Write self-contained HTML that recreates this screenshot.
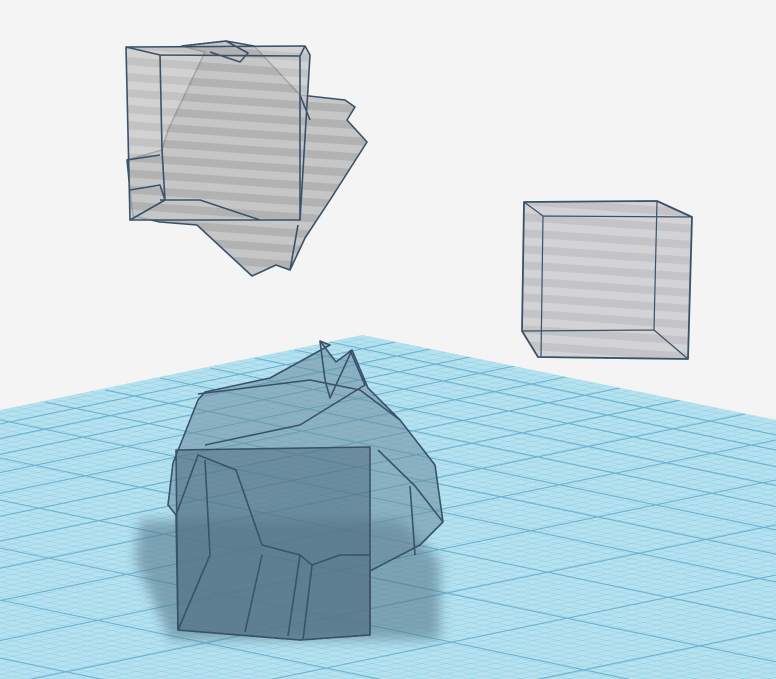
<!DOCTYPE html>
<html><head><style>html,body{margin:0;padding:0;background:#f4f4f4;overflow:hidden;width:776px;height:679px}svg{display:block;position:absolute;left:0;top:0}</style></head>
<body>
<svg width="776" height="679" viewBox="0 0 776 679" xmlns="http://www.w3.org/2000/svg" overflow="hidden">
<defs>
<pattern id="st" width="40" height="16" patternUnits="userSpaceOnUse" patternTransform="rotate(4)">
<rect width="40" height="16" fill="#c6c6c6"/><rect width="40" height="8" fill="#b2b2b2"/>
</pattern>
<pattern id="st2" width="40" height="16" patternUnits="userSpaceOnUse" patternTransform="rotate(4)">
<rect width="40" height="16" fill="#d3d3d6"/><rect width="40" height="8" fill="#c4c4c8"/>
</pattern>
<pattern id="fa" width="5" height="5" patternUnits="userSpaceOnUse" patternTransform="rotate(11.6)">
<path d="M0 0H5" stroke="#8ccbe0" stroke-width="0.8"/>
</pattern>
<pattern id="fb" width="5" height="5" patternUnits="userSpaceOnUse" patternTransform="rotate(-11.7)">
<path d="M0 0H5" stroke="#8ccbe0" stroke-width="0.8"/>
</pattern>
<clipPath id="pl"><polygon points="0,410 362,335 776,420 776,679 0,679"/></clipPath>
</defs>
<rect width="776" height="679" fill="#f4f4f4"/>
<polygon points="0,410 362,335 776,420 776,679 0,679" fill="#b6e2f0"/>
<polygon points="0,410 362,335 776,420 776,679 0,679" fill="url(#fa)"/>
<polygon points="0,410 362,335 776,420 776,679 0,679" fill="url(#fb)"/>
<g clip-path="url(#pl)" stroke="#6ab3d0" stroke-width="1.1" fill="none">
<path d="M330,342 L1400,565 M295,350 L1400,580 M255,358 L1400,597 M210,368 L1400,615 M160,378 L1400,637 M105,390 L1400,660 M45,402 L1400,684 M0,420 L1400,712 M0,458 L1400,750 M0,500 L1400,792 M0,548 L1400,840 M0,600 L1400,892 M0,658 L1400,950"/>
<path d="M395,342 L-800,590 M430,349 L-800,605 M470,357 L-800,620 M515,366 L-800,638 M565,377 L-800,658 M620,388 L-800,682 M680,400 L-800,707 M745,414 L-800,734 M776,440 L-800,766 M776,480 L-800,806 M776,525 L-800,851 M776,575 L-800,901 M776,630 L-800,956"/>
</g>
<path d="M140,520 L400,520 L440,560 L440,640 L170,640 L135,560Z" fill="#4f7183" opacity="0.55" style="filter:blur(6px)"/>
<g stroke="#3a5269" stroke-width="1.6" stroke-linejoin="round">
<polygon points="320,341 336,362 352,350 368,388 400,420 435,465 443,522 420,545 370,571 370,635 300,640 178,630 176,515 168,505 173,463 198,400 205,392 270,378 330,345" fill="#6a8a9d" fill-opacity="0.55"/>
<polygon points="176,450 370,447 370,635 300,640 178,630" fill="#4a687b" fill-opacity="0.5"/>
<path d="M198,394 L310,380 L360,390 L400,420 M205,445 L300,425 L365,385 L350,350 M320,341 L325,380 L330,398 L352,350 M378,450 L415,486 L443,522 M176,515 L198,455 L236,470 L262,545 L300,555 L312,565 L340,555 L370,555 M205,460 L210,555 L178,630 M262,555 L245,632 M300,555 L288,636 M312,565 L303,640 M410,486 L415,555" fill="none"/>
</g>
<g stroke="#3a5269" stroke-width="1.6" stroke-linejoin="round">
<polygon points="226,41 254,46 300,95 345,100 355,107 347,120 367,142 330,200 305,238 290,270 276,265 252,276 197,225 160,222 133,216 130,190 127,160 162,150 168,130 205,52 182,46" fill="url(#st)"/>
<polygon points="126,47 305,46 310,55 300,220 130,220" fill="url(#st)" fill-opacity="0.75"/>
<path d="M126,47 L160,55 L300,56 L305,46 M160,55 L162,150 L165,200 L130,220 M300,56 L300,220 M160,200 L200,200 L260,220 M182,46 L226,41 L248,53 L240,62 L210,52 M130,190 L160,185 L165,200 M127,160 L160,155 M300,95 L310,120 M290,270 L298,225" fill="none"/>
</g>
<g stroke="#3a5269" stroke-width="1.8" stroke-linejoin="round">
<polygon points="524,202 657,201 692,217 688,359 538,357 522,331" fill="url(#st2)"/>
<path d="M524,202 L543,216 L692,217 M543,216 L541,357 M657,201 L654,330 L522,331 M654,330 L688,359" fill="none" stroke-width="1.2"/>
</g>
</svg>
</body></html>
